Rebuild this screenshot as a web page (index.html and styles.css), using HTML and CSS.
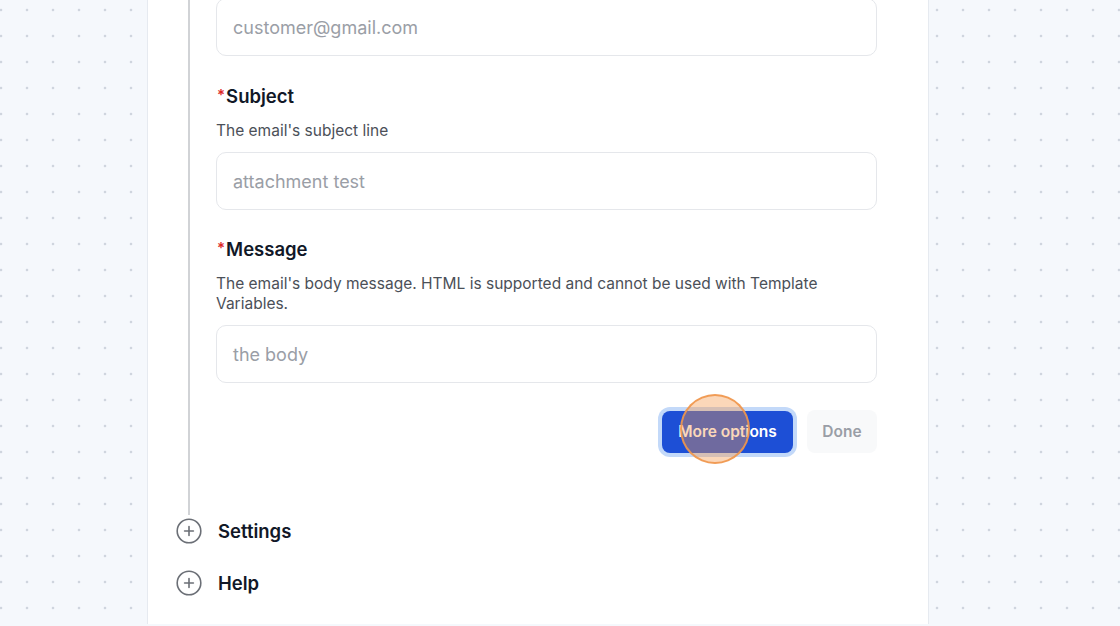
FILE: index.html
```html
<!DOCTYPE html>
<html lang="en">
<head>
<meta charset="utf-8">
<title>Send email step</title>
<link rel="stylesheet" href="styles.css">
</head>
<body>
<div class="page">
  <main class="panel">
    <div class="step">
      <div class="rail"><div class="rail-line"></div></div>
      <div class="content">
        <div class="input">customer@gmail.com</div>

        <div class="field">
          <div class="label"><span class="req">*</span>Subject</div>
          <div class="desc">The email's subject line</div>
          <div class="input">attachment test</div>
        </div>

        <div class="field">
          <div class="label"><span class="req">*</span>Message</div>
          <div class="desc">The email's body message. HTML is supported and cannot be used with Template Variables.</div>
          <div class="input">the body</div>
        </div>

        <div class="actions">
          <button class="btn btn-primary">More options<span class="cursor-ring"></span></button>
          <button class="btn btn-done">Done</button>
        </div>
      </div>
    </div>

    <div class="sections">
      <div class="section">
        <svg class="plus-icon" width="26" height="26" viewBox="0 0 26 26" aria-hidden="true">
          <circle cx="13" cy="13" r="11.8" fill="none" stroke="#6b6f76" stroke-width="1.6"/>
          <path d="M13 8.6v8.8M8.6 13h8.8" stroke="#6b6f76" stroke-width="1.6" stroke-linecap="round"/>
        </svg>
        <span class="section-title">Settings</span>
      </div>
      <div class="section">
        <svg class="plus-icon" width="26" height="26" viewBox="0 0 26 26" aria-hidden="true">
          <circle cx="13" cy="13" r="11.8" fill="none" stroke="#6b6f76" stroke-width="1.6"/>
          <path d="M13 8.6v8.8M8.6 13h8.8" stroke="#6b6f76" stroke-width="1.6" stroke-linecap="round"/>
        </svg>
        <span class="section-title">Help</span>
      </div>
    </div>
  </main>
</div>
</body>
</html>
```

FILE: styles.css
```css
* { box-sizing: border-box; }

html, body {
  margin: 0;
  padding: 0;
  height: 100%;
  overflow: hidden;
}

body {
  font-family: Inter, "Noto Sans", "Liberation Sans", sans-serif;
  background-color: #f5f8fc;
  background-image: radial-gradient(circle, #cfd5de 1px, transparent 1.7px);
  background-size: 26px 26px;
  background-position: -12px -3px;
  color: #111827;
}

.page {
  padding-left: 147px;
  height: 100%;
}

.panel {
  width: 782px;
  height: 100%;
  background: #ffffff;
  border-left: 1px solid #e6eaf0;
  border-right: 1px solid #e6eaf0;
  padding-right: 51px;
}

.step {
  display: flex;
  margin-top: -2px;
}

.rail {
  width: 68px;
  flex: none;
  display: flex;
  padding-left: 40px;
}

.rail-line {
  width: 2px;
  background: #d1d3d6;
}

.content {
  flex: 1;
  display: flex;
  flex-direction: column;
  padding-bottom: 62px;
}

.input {
  height: 58px;
  border: 1px solid #e5e7eb;
  border-radius: 10px;
  padding: 0 16px;
  display: flex;
  align-items: center;
  font-size: 18px;
  color: #9a9ea6;
}

.field {
  display: flex;
  flex-direction: column;
  margin-top: 28px;
}

.field + .field {
  margin-top: 27px;
}

.label {
  font-size: 18.5px;
  line-height: 24px;
  font-weight: 600;
  color: #111827;
}

.req {
  color: #dc2626;
  font-size: 15px;
  position: relative;
  top: -3px;
  margin-left: 1px;
  margin-right: 1px;
}

.desc {
  margin-top: 11px;
  font-size: 15.5px;
  line-height: 20px;
  color: #4b5058;
  margin-bottom: 11px;
}

.actions {
  display: flex;
  justify-content: flex-end;
  align-items: center;
  gap: 14px;
  margin-top: 27px;
}

.btn {
  font-family: inherit;
  font-size: 15.5px;
  font-weight: 600;
  height: 42px;
  border: none;
  border-radius: 8px;
  padding: 0;
  white-space: nowrap;
  cursor: pointer;
}

.btn-primary {
  position: relative;
  background: #1d4fd6;
  color: #ffffff;
  box-shadow: 0 0 0 4px #c3d9f9;
  width: 131px;
}

.btn-done {
  background: #f8f9fa;
  color: #9a9ea6;
  width: 70px;
  height: 43px;
}

.cursor-ring {
  position: absolute;
  left: 18px;
  top: -17px;
  width: 70px;
  height: 70px;
  border-radius: 50%;
  background: rgba(245, 150, 70, 0.38);
  border: 2px solid rgba(240, 150, 75, 0.9);
  pointer-events: none;
}

.sections {
  display: flex;
  flex-direction: column;
  gap: 20px;
}

.section {
  height: 32px;
  display: flex;
  align-items: center;
  padding-left: 28px;
  gap: 16px;
}

.plus-icon {
  flex: none;
}

.section-title {
  font-size: 18.5px;
  font-weight: 600;
  color: #111827;
}
```
